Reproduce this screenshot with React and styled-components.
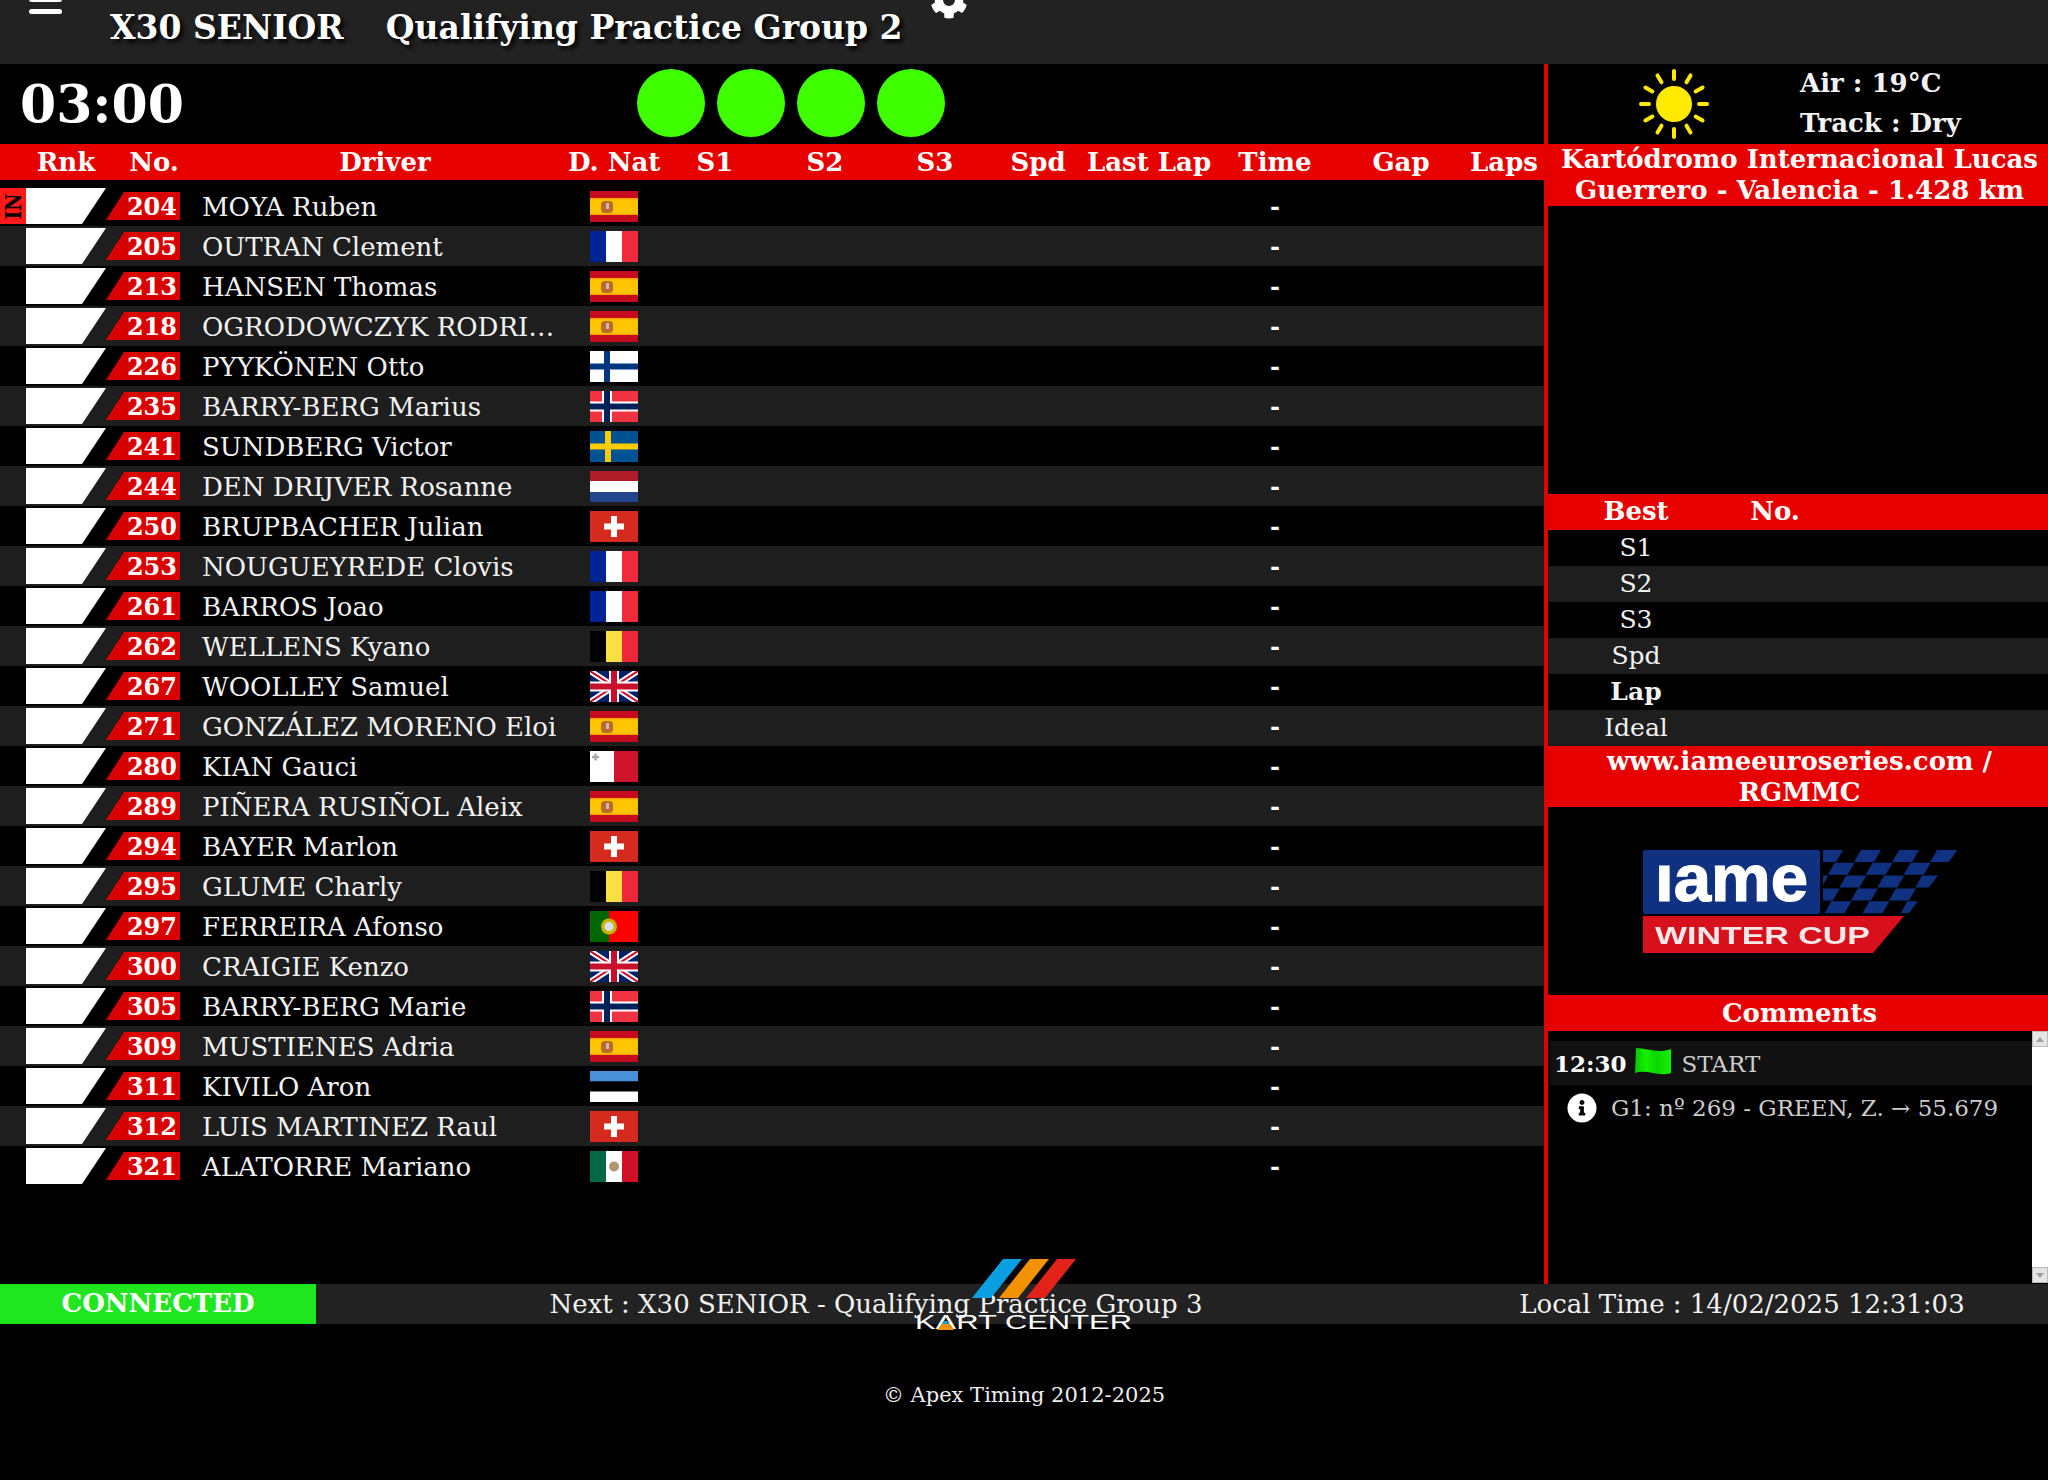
import React from "react";
import styled, { createGlobalStyle } from "styled-components";
import { FaCog, FaInfoCircle } from "react-icons/fa";

const GlobalStyle = createGlobalStyle`
  html, body {
    margin: 0;
    padding: 0;
    background: #000;
    color: #fff;
    font-family: "DejaVu Serif", "Liberation Serif", serif;
  }
  * { box-sizing: border-box; }
`;

const COLUMNS = "26px 80px 94px 368px 92px 110px 110px 110px 96px 126px 126px 126px 80px";

const Page = styled.div`
  width: 2048px;
  height: 1480px;
  overflow: hidden;
  display: flex;
  flex-direction: column;
`;

const TopBar = styled.header`
  height: 64px;
  background: #222;
  display: flex;
  align-items: flex-start;
  overflow: hidden;
`;

const Burger = styled.div`
  width: 33px;
  margin: -3px 0 0 29px;
  display: flex;
  flex-direction: column;
  gap: 7px;
  span {
    height: 5px;
    border-radius: 3px;
    background: #fff;
  }
`;

const Title = styled.h1`
  margin: 8px 0 0 48px;
  font-size: 33px;
  line-height: 40px;
  font-weight: 700;
  white-space: nowrap;
  text-shadow: 3px 3px 4px #000;
  span + span { margin-left: 42px; }
`;

const Gear = styled(FaCog)`
  margin: -19px 0 0 27px;
  color: #fff;
  font-size: 38px;
`;

const Main = styled.div`
  height: 1220px;
  display: flex;
`;

const Left = styled.section`
  width: 1544px;
`;

const TimerRow = styled.div`
  height: 80px;
  display: flex;
  align-items: center;
`;

const Timer = styled.div`
  width: 637px;
  margin-top: -2px;
  padding-left: 20px;
  font-size: 52px;
  font-weight: 700;
`;

const Lights = styled.div`
  display: flex;
  gap: 12px;
  margin-top: -2px;
`;

const Light = styled.div`
  width: 68px;
  height: 68px;
  border-radius: 50%;
  background: #3fff00;
`;

const HeadRow = styled.div`
  height: 36px;
  background: #e60000;
  display: grid;
  grid-template-columns: ${COLUMNS};
  align-items: center;
  margin-bottom: 6px;
  font-size: 26px;
  font-weight: 700;
  text-align: center;
`;

const HeadCell = styled.div`
  grid-column: ${(p) => p.$col};
  padding-left: ${(p) => p.$nudge || 0}px;
  white-space: nowrap;
`;

const DriverRow = styled.div`
  height: 40px;
  display: grid;
  grid-template-columns: ${COLUMNS};
  align-items: center;
  background: ${(p) => (p.$alt ? "#1e1e1e" : "#000")};
`;

const Status = styled.div`
  height: 36px;
  background: ${(p) => (p.$show ? "#ff1a1a" : "transparent")};
  color: #000;
  display: flex;
  align-items: center;
  justify-content: center;
  span {
    display: block;
    transform: rotate(-90deg) scaleX(0.82);
    font-size: 23px;
    font-weight: 700;
    line-height: 1;
  }
`;

const RankBox = styled.div`
  height: 36px;
  background: #fff;
  clip-path: polygon(0 0, 100% 0, 70% 100%, 0 100%);
`;

const NumberBox = styled.div`
  width: 74px;
  height: 28px;
  background: #d80000;
  clip-path: polygon(18px 0, 100% 0, 100% 100%, 0 100%);
  text-align: right;
  padding-right: 3px;
  font-size: 24px;
  font-weight: 700;
  line-height: 29px;
`;

const Name = styled.div`
  padding: 1px 0 0 2px;
  font-size: 26px;
  color: #f2f2f2;
  white-space: nowrap;
  overflow: hidden;
  text-overflow: ellipsis;
`;

const FlagCell = styled.div`
  display: flex;
  justify-content: center;
  svg { display: block; }
`;

const Dash = styled.div`
  grid-column: 11;
  text-align: center;
  font-size: 24px;
  font-weight: 700;
`;

const Right = styled.aside`
  width: 504px;
  border-left: 4px solid #e00000;
  display: flex;
  flex-direction: column;
`;

const Weather = styled.div`
  height: 80px;
  display: flex;
  align-items: center;
`;

const Sun = styled.div`
  width: 252px;
  display: flex;
  justify-content: center;
`;

const WeatherText = styled.div`
  margin-top: -3px;
  font-size: 26px;
  font-weight: 700;
  line-height: 40px;
  color: #f2f2f2;
`;

const RedBlock = styled.div`
  height: ${(p) => p.$h}px;
  background: #e60000;
  padding-left: 3px;
  font-size: 26px;
  font-weight: 700;
  line-height: 31px;
  text-align: center;
`;

const CommentsHead = styled(RedBlock)`
  line-height: 37px;
`;

const Spacer = styled.div`
  height: ${(p) => p.$h}px;
`;

const BestHead = styled.div`
  height: 36px;
  padding-bottom: 3px;
  background: #e60000;
  display: grid;
  grid-template-columns: 176px 102px 1fr;
  align-items: center;
  text-align: center;
  font-size: 26px;
  font-weight: 700;
`;

const BestRow = styled.div`
  height: 36px;
  padding-bottom: 1px;
  background: ${(p) => (p.$alt ? "#1e1e1e" : "#000")};
  display: grid;
  grid-template-columns: 176px 1fr;
  align-items: center;
  text-align: center;
  font-size: 25px;
  font-weight: ${(p) => (p.$bold ? 700 : 400)};
  color: #f2f2f2;
`;

const LogoZone = styled.div`
  height: 188px;
  padding-left: 3px;
  display: flex;
  align-items: center;
  justify-content: center;
  svg { filter: blur(0.5px); }
`;

const CommentsWrap = styled.div`
  height: 252px;
  display: flex;
`;

const CommentList = styled.div`
  flex: 1;
  padding: 10px 0 0 2px;
`;

const CommentRow = styled.div`
  height: 44px;
  padding-top: 1px;
  background: ${(p) => (p.$alt ? "#111" : "transparent")};
  display: flex;
  align-items: center;
  padding-left: ${(p) => p.$indent || 4}px;
  color: #ccc;
  font-size: 23px;
  white-space: nowrap;
`;

const CommentTime = styled.b`
  color: #fff;
`;

const Flagged = styled.svg`
  margin: 0 11px 4px 8px;
`;

const Info = styled(FaInfoCircle)`
  color: #fff;
  font-size: 30px;
  margin-right: 14px;
`;

const Scrollbar = styled.div`
  width: 16px;
  background: #fff;
  display: flex;
  flex-direction: column;
  justify-content: space-between;
`;

const ScrollBtn = styled.div`
  height: 16px;
  background: #e4e4e4;
  border: 1px solid #bbb;
  display: flex;
  align-items: center;
  justify-content: center;
  &::after {
    content: "";
    border-left: 4px solid transparent;
    border-right: 4px solid transparent;
    border-${(p) => (p.$down ? "top" : "bottom")}: 5px solid #a0a0a0;
  }
`;

const Footer = styled.footer`
  position: relative;
  height: 40px;
  background: #222;
  display: grid;
  grid-template-columns: 316px 1118px 614px;
  align-items: center;
  text-align: center;
  font-size: 26px;
  color: #f2f2f2;
`;

const FooterText = styled.div`
  padding-left: 2px;
`;

const Connected = styled.div`
  height: 40px;
  line-height: 38px;
  background: #1fe61f;
  color: #fff;
  font-weight: 700;
`;

const KartLogo = styled.svg`
  position: absolute;
  left: 912px;
  top: -25px;
`;

const Copyright = styled.div`
  margin-top: 59px;
  text-align: center;
  font-size: 21px;
  color: #eee;
`;

const Spain = () => (
  <>
    <rect width="48" height="31" fill="#c60b1e" />
    <rect y="7" width="48" height="17" fill="#f5a800" />
    <rect y="8.5" width="48" height="14" fill="#ffc400" />
    <rect x="11" y="10" width="12" height="12" rx="4" fill="#ad5a2a" opacity="0.85" />
    <rect x="16" y="12" width="3" height="6" fill="#c8b8c8" />
  </>
);

const vertical = (a, b, c) => (
  <>
    <rect width="16" height="31" fill={a} />
    <rect x="16" width="16" height="31" fill={b} />
    <rect x="32" width="16" height="31" fill={c} />
  </>
);

const nordic = (bg, c1, c2) => (
  <>
    <rect width="48" height="31" fill={bg} />
    {c2 && <rect x="12" width="10" height="31" fill={c2} />}
    {c2 && <rect y="10.5" width="48" height="10" fill={c2} />}
    <rect x="14" width="6" height="31" fill={c1} />
    <rect y="12.5" width="48" height="6" fill={c1} />
  </>
);

const FLAGS = {
  ESP: <Spain />,
  FRA: vertical("#002496", "#fff", "#ef2b3c"),
  BEL: vertical("#000", "#fae042", "#ed2939"),
  MEX: (
    <>
      {vertical("#006847", "#fff", "#ce1126")}
      <circle cx="24" cy="15.5" r="5" fill="#9a7a50" opacity="0.8" />
    </>
  ),
  FIN: nordic("#fff", "#003580"),
  NOR: nordic("#ef3340", "#00205b", "#fff"),
  SWE: (
    <>
      <rect width="48" height="31" fill="#005293" />
      <rect x="15" width="6" height="31" fill="#fecb00" />
      <rect y="12.5" width="48" height="6" fill="#fecb00" />
    </>
  ),
  NED: (
    <>
      <rect width="48" height="11" fill="#ae1c28" />
      <rect y="10" width="48" height="11" fill="#fff" />
      <rect y="21" width="48" height="10" fill="#21468b" />
    </>
  ),
  SUI: (
    <>
      <rect width="48" height="31" fill="#d52b1e" />
      <rect x="21" y="5" width="6" height="21" fill="#fff" />
      <rect x="14" y="12.5" width="20" height="6" fill="#fff" />
    </>
  ),
  GBR: (
    <>
      <rect width="48" height="31" fill="#012169" />
      <path d="M0 0L48 31M48 0L0 31" stroke="#fff" strokeWidth="6" />
      <path d="M0 0L48 31M48 0L0 31" stroke="#c8102e" strokeWidth="2" />
      <rect x="19" width="10" height="31" fill="#fff" />
      <rect y="10.5" width="48" height="10" fill="#fff" />
      <rect x="21" width="6" height="31" fill="#c8102e" />
      <rect y="12.5" width="48" height="6" fill="#c8102e" />
    </>
  ),
  MLT: (
    <>
      <rect width="24" height="31" fill="#fff" />
      <rect x="24" width="24" height="31" fill="#cf142b" />
      <path d="M5.5 2.5v7M2 6h7" stroke="#b0a8a8" strokeWidth="2.4" />
    </>
  ),
  POR: (
    <>
      <rect width="19" height="31" fill="#006600" />
      <rect x="19" width="29" height="31" fill="#f00" />
      <circle cx="19" cy="15.5" r="8" fill="#c8b400" />
      <circle cx="19" cy="15.5" r="4.5" fill="#d8e0f0" />
    </>
  ),
  EST: (
    <>
      <rect width="48" height="10.5" fill="#4891d9" />
      <rect y="10.5" width="48" height="10" fill="#000" />
      <rect y="20.5" width="48" height="10.5" fill="#fff" />
    </>
  ),
};

const DRIVERS = [
  ["204", "MOYA Ruben", "ESP"],
  ["205", "OUTRAN Clement", "FRA"],
  ["213", "HANSEN Thomas", "ESP"],
  ["218", "OGRODOWCZYK RODRI…", "ESP"],
  ["226", "PYYKÖNEN Otto", "FIN"],
  ["235", "BARRY-BERG Marius", "NOR"],
  ["241", "SUNDBERG Victor", "SWE"],
  ["244", "DEN DRIJVER Rosanne", "NED"],
  ["250", "BRUPBACHER Julian", "SUI"],
  ["253", "NOUGUEYREDE Clovis", "FRA"],
  ["261", "BARROS Joao", "FRA"],
  ["262", "WELLENS Kyano", "BEL"],
  ["267", "WOOLLEY Samuel", "GBR"],
  ["271", "GONZÁLEZ MORENO Eloi", "ESP"],
  ["280", "KIAN Gauci", "MLT"],
  ["289", "PIÑERA RUSIÑOL Aleix", "ESP"],
  ["294", "BAYER Marlon", "SUI"],
  ["295", "GLUME Charly", "BEL"],
  ["297", "FERREIRA Afonso", "POR"],
  ["300", "CRAIGIE Kenzo", "GBR"],
  ["305", "BARRY-BERG Marie", "NOR"],
  ["309", "MUSTIENES Adria", "ESP"],
  ["311", "KIVILO Aron", "EST"],
  ["312", "LUIS MARTINEZ Raul", "SUI"],
  ["321", "ALATORRE Mariano", "MEX"],
];

const HEADS = [
  ["Rnk", 2], ["No.", 3, 2], ["Driver", 4, 2], ["D. Nat", 5], ["S1", 6], ["S2", 7], ["S3", 8],
  ["Spd", 9], ["Last Lap", 10], ["Time", 11], ["Gap", 12], ["Laps", 13],
];

const BEST = ["S1", "S2", "S3", "Spd", "Lap", "Ideal"];

function SunIcon() {
  const rays = Array.from({ length: 12 }, (_, i) => i * 30);
  return (
    <svg width="72" height="72" viewBox="-36 -36 72 72">
      <circle r="18" fill="#ffea00" />
      {rays.map((a) => (
        <line
          key={a}
          x1="0"
          y1="-25"
          x2="0"
          y2="-33"
          stroke="#ffea00"
          strokeWidth="4"
          strokeLinecap="round"
          transform={`rotate(${a})`}
        />
      ))}
    </svg>
  );
}

function IameLogo() {
  const cells = [];
  for (let r = 0; r < 5; r++) {
    for (let c = -1; c < 6; c++) {
      cells.push(
        <rect key={`${r}-${c}`} x={c * 38 + (r % 2 ? 19 : 0)} y={r * 12.8} width="20" height="12" />
      );
    }
  }
  return (
    <svg width="320" height="113" viewBox="1640 845 320 113">
      <defs>
        <clipPath id="chk">
          <polygon points="1823,850 1958,850 1908,914 1823,914" />
        </clipPath>
      </defs>
      <g clipPath="url(#chk)" fill="#10317f">
        <g transform="translate(1823 850) skewX(-30)">{cells}</g>
      </g>
      <rect x="1643" y="850" width="177" height="64" rx="2" fill="#10317f" />
      <text
        x="1655"
        y="901"
        fontFamily="Liberation Sans, sans-serif"
        fontWeight="700"
        fontSize="66"
        fill="#fff"
        stroke="#fff"
        strokeWidth="1.2"
        textLength="153"
        lengthAdjust="spacingAndGlyphs"
      >
        ıame
      </text>
      <polygon points="1643,916 1904,916 1873,953 1643,953" fill="#d8101c" />
      <text
        x="1655"
        y="944"
        fontFamily="Liberation Sans, sans-serif"
        fontWeight="700"
        fontSize="24"
        fill="#f4e8e8"
        textLength="215"
        lengthAdjust="spacingAndGlyphs"
      >
        WINTER CUP
      </text>
    </svg>
  );
}

function KartCenter() {
  return (
    <KartLogo width="224" height="72" viewBox="912 1259 224 72">
      <polygon points="1003,1259 1022,1259 991,1298 972,1298" fill="#0a9fe0" />
      <polygon points="1030,1259 1049,1259 1018,1298 999,1298" fill="#f39200" />
      <polygon points="1057,1259 1076,1259 1045,1298 1026,1298" fill="#e2231a" />
      <text
        x="915"
        y="1329"
        fontFamily="Liberation Sans, sans-serif"
        fontSize="21"
        fill="#fff"
        textLength="217"
        lengthAdjust="spacingAndGlyphs"
      >
        KART CENTER
      </text>
      <polygon points="943,1322 948,1322 954,1330 937,1330" fill="#f39200" />
      <polygon points="944,1321 947,1321 949,1324 942,1324" fill="#0a9fe0" />
    </KartLogo>
  );
}

export default function App() {
  return (
    <Page>
      <GlobalStyle />
      <TopBar>
        <Burger>
          <span />
          <span />
        </Burger>
        <Title>
          <span>X30 SENIOR</span>
          <span>Qualifying Practice Group 2</span>
        </Title>
        <Gear />
      </TopBar>
      <Main>
        <Left>
          <TimerRow>
            <Timer>03:00</Timer>
            <Lights>
              <Light />
              <Light />
              <Light />
              <Light />
            </Lights>
          </TimerRow>
          <HeadRow>
            {HEADS.map(([label, col, nudge]) => (
              <HeadCell key={label} $col={col} $nudge={nudge}>
                {label}
              </HeadCell>
            ))}
          </HeadRow>
          {DRIVERS.map(([no, name, nat], i) => (
            <DriverRow key={no} $alt={i % 2 === 1}>
              <Status $show={i === 0}>{i === 0 && <span>IN</span>}</Status>
              <RankBox />
              <NumberBox>{no}</NumberBox>
              <Name>{name}</Name>
              <FlagCell>
                <svg width="48" height="31" viewBox="0 0 48 31">
                  {FLAGS[nat]}
                </svg>
              </FlagCell>
              <Dash>-</Dash>
            </DriverRow>
          ))}
        </Left>
        <Right>
          <Weather>
            <Sun>
              <SunIcon />
            </Sun>
            <WeatherText>
              <div>Air : 19°C</div>
              <div>Track : Dry</div>
            </WeatherText>
          </Weather>
          <RedBlock $h={62}>
            Kartódromo Internacional Lucas
            <br />
            Guerrero - Valencia - 1.428 km
          </RedBlock>
          <Spacer $h={288} />
          <BestHead>
            <div>Best</div>
            <div>No.</div>
          </BestHead>
          {BEST.map((label, i) => (
            <BestRow key={label} $alt={i % 2 === 1} $bold={label === "Lap"}>
              <div>{label}</div>
            </BestRow>
          ))}
          <RedBlock $h={61}>
            www.iameeuroseries.com /
            <br />
            RGMMC
          </RedBlock>
          <LogoZone>
            <IameLogo />
          </LogoZone>
          <CommentsHead $h={36}>Comments</CommentsHead>
          <CommentsWrap>
            <CommentList>
              <CommentRow $alt>
                <CommentTime>12:30</CommentTime>
                <Flagged width="36" height="27" viewBox="0 0 36 27">
                  <defs>
                    <linearGradient id="flagShade">
                      <stop offset="0" stopColor="#0cc400" />
                      <stop offset="0.3" stopColor="#12f000" />
                      <stop offset="0.6" stopColor="#0cd800" />
                      <stop offset="1" stopColor="#12f000" />
                    </linearGradient>
                  </defs>
                  <path d="M1 0C12 0 22 6 36 1V25C24 29 12 21 0 25Z" fill="url(#flagShade)" />
                </Flagged>
                START
              </CommentRow>
              <CommentRow $indent={17}>
                <Info />
                G1: nº 269 - GREEN, Z. → 55.679
              </CommentRow>
            </CommentList>
            <Scrollbar>
              <ScrollBtn />
              <ScrollBtn $down />
            </Scrollbar>
          </CommentsWrap>
        </Right>
      </Main>
      <Footer>
        <Connected>CONNECTED</Connected>
        <FooterText>Next : X30 SENIOR - Qualifying Practice Group 3</FooterText>
        <FooterText>Local Time : 14/02/2025 12:31:03</FooterText>
        <KartCenter />
      </Footer>
      <Copyright>© Apex Timing 2012-2025</Copyright>
    </Page>
  );
}
